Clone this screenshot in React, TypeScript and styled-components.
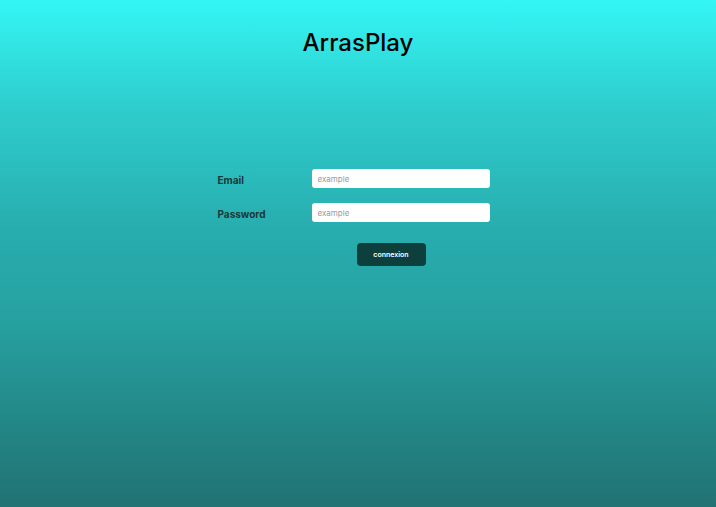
import React from "react";
import styled, { createGlobalStyle } from "styled-components";

const Global = createGlobalStyle`
  html, body { margin: 0; padding: 0; height: 100%; }
  body { font-family: Inter, "Noto Sans", sans-serif; }
  #root { min-height: 100%; }
`;

const Page = styled.div`
  min-height: 507px;
  height: 100vh;
  box-sizing: border-box;
  background: linear-gradient(180deg, #34f6f5 0%, #2fcfcf 20%, #28adae 45%, #27a2a2 62%, #238585 85%, #227273 100%);
  display: flex;
  flex-direction: column;
  align-items: center;
  padding-top: 26px;
`;

const Title = styled.h1`
  margin: 0;
  font-family: Inter, sans-serif;
  font-weight: 500;
  font-size: 24px;
  line-height: 34px;
  color: #000;
`;

const Form = styled.form`
  margin-top: 109px;
  margin-left: -10px;
  display: grid;
  grid-template-columns: 95px 178px;
  row-gap: 15px;
  align-items: center;
`;

const Label = styled.label`
  font-family: Inter, sans-serif;
  font-weight: 700;
  font-size: 10px;
  color: #17393a;
  padding-top: 3px;
  padding-left: 1px;
`;

const Input = styled.input`
  box-sizing: border-box;
  width: 178px;
  height: 19px;
  border: none;
  border-radius: 3px;
  background: #fff;
  padding: 0 6px;
  font-family: Inter, sans-serif;
  font-size: 8px;
  color: #333;
  outline: none;
  &::placeholder { color: #9a9a9a; }
`;

const ButtonRow = styled.div`
  grid-column: 1 / span 2;
  padding-left: 140px;
  padding-top: 4px;
`;

const Button = styled.button`
  width: 69px;
  height: 23px;
  border: none;
  border-radius: 4px;
  background: #0d3f3d;
  color: #fff;
  font-family: Inter, sans-serif;
  font-weight: 600;
  font-size: 7px;
  cursor: pointer;
`;

export default function App() {
  return (
    <>
      <Global />
      <Page>
        <Title>ArrasPlay</Title>
        <Form onSubmit={(e) => e.preventDefault()}>
          <Label htmlFor="email">Email</Label>
          <Input id="email" type="email" placeholder="example" />
          <Label htmlFor="password">Password</Label>
          <Input id="password" type="password" placeholder="example" />
          <ButtonRow>
            <Button type="submit">connexion</Button>
          </ButtonRow>
        </Form>
      </Page>
    </>
  );
}
